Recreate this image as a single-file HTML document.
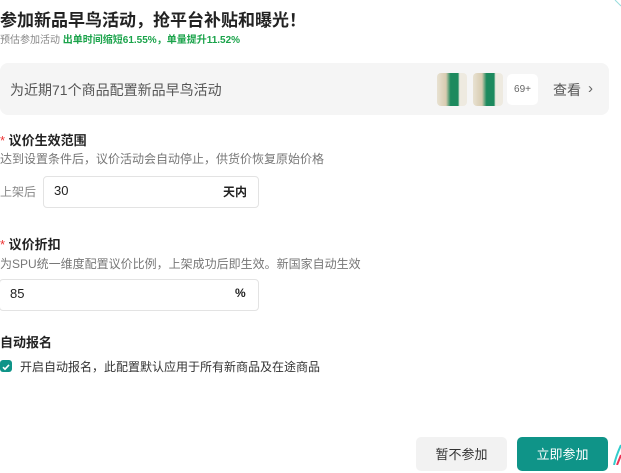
<!DOCTYPE html>
<html><head><meta charset="utf-8"><style>
body{margin:0;width:621px;height:465px;overflow:hidden;background:#fff;font-family:"Liberation Sans","Noto Sans CJK SC",sans-serif;position:relative;color:#222}
.a{position:absolute;white-space:nowrap}
.inp{position:absolute;border:1px solid #e3e3e3;border-radius:4px;background:#fff}
</style></head><body>
<div class="a" style="left:0;top:6px;font-size:17px;font-weight:bold;color:#222">参加新品早鸟活动，抢平台补贴和曝光！</div>
<div class="a" style="left:0;top:31px;font-size:10px;color:#888">预估参加活动 <span style="color:#1aa34a;font-weight:bold">出单时间缩短61.55%，单量提升11.52%</span></div>
<div class="a" style="left:0;top:63px;width:609px;height:52px;background:#f5f5f5;border-radius:8px"></div>
<div class="a" style="left:10px;top:80px;font-size:14px;color:#555">为近期71个商品配置新品早鸟活动</div>
<div class="a" style="left:437px;top:73px;width:30px;height:33px;border-radius:4px;background:linear-gradient(90deg,#e8e2d2 0,#d8cbb0 30%,#1d8a5e 45%,#1d8a5e 70%,#eeeae0 75%)"></div>
<div class="a" style="left:473px;top:73px;width:30px;height:33px;border-radius:4px;background:linear-gradient(90deg,#e8e2d2 0,#d8cbb0 30%,#1d8a5e 45%,#1d8a5e 70%,#eeeae0 75%)"></div>
<div class="a" style="left:507px;top:74px;width:31px;height:31px;border-radius:5px;background:#fff;font-size:10px;color:#666;text-align:center;line-height:31px">69+</div>
<div class="a" style="left:553px;top:80px;font-size:14px;color:#555">查看</div>
<div class="a" style="left:588px;top:80px;font-size:15px;color:#666">›</div>

<div class="a" style="left:0;top:130px;font-size:13px;font-weight:bold"><span style="color:#e33;font-weight:normal">*</span> 议价生效范围</div>
<div class="a" style="left:0;top:150px;font-size:12px;color:#777">达到设置条件后，议价活动会自动停止，供货价恢复原始价格</div>
<div class="a" style="left:0;top:183px;font-size:12px;color:#888">上架后</div>
<div class="inp" style="left:43px;top:176px;width:214px;height:30px"></div>
<div class="a" style="left:54px;top:183px;font-size:13px">30</div>
<div class="a" style="left:223px;top:183px;font-size:12px;font-weight:bold">天内</div>

<div class="a" style="left:0;top:234px;font-size:13px;font-weight:bold"><span style="color:#e33;font-weight:normal">*</span> 议价折扣</div>
<div class="a" style="left:0;top:255px;font-size:12px;color:#777">为SPU统一维度配置议价比例，上架成功后即生效。新国家自动生效</div>
<div class="inp" style="left:-1px;top:279px;width:258px;height:30px"></div>
<div class="a" style="left:10px;top:286px;font-size:13px">85</div>
<div class="a" style="left:235px;top:286px;font-size:12px;font-weight:bold">%</div>

<div class="a" style="left:0;top:332px;font-size:13px;font-weight:bold">自动报名</div>
<div class="a" style="left:0;top:360px;width:12px;height:12px;border-radius:3px;background:#0f9488"><svg width="12" height="12"><path d="M3 6.2l2 2 4-4.3" stroke="#fff" stroke-width="1.6" fill="none"/></svg></div>
<div class="a" style="left:20px;top:358px;font-size:12px;color:#333">开启自动报名，此配置默认应用于所有新商品及在途商品</div>

<div class="a" style="left:416px;top:437px;width:91px;height:34px;border-radius:5px;background:#f2f2f2;font-size:13px;color:#333;text-align:center;line-height:36px">暂不参加</div>
<div class="a" style="left:517px;top:437px;width:91px;height:34px;border-radius:5px;background:#0f9488;font-size:13px;color:#fff;text-align:center;line-height:36px">立即参加</div>
<svg class="a" style="left:600px;top:0" width="21" height="465"><path d="M15 0 Q19 4 21 6" stroke="#9dd" stroke-width="1" fill="none"/><path d="M21 445 Q16 456 14 465" stroke="#3cc" stroke-width="2" fill="none"/><path d="M21 455 L17 465" stroke="#e35" stroke-width="2" fill="none"/></svg>
</body></html>
